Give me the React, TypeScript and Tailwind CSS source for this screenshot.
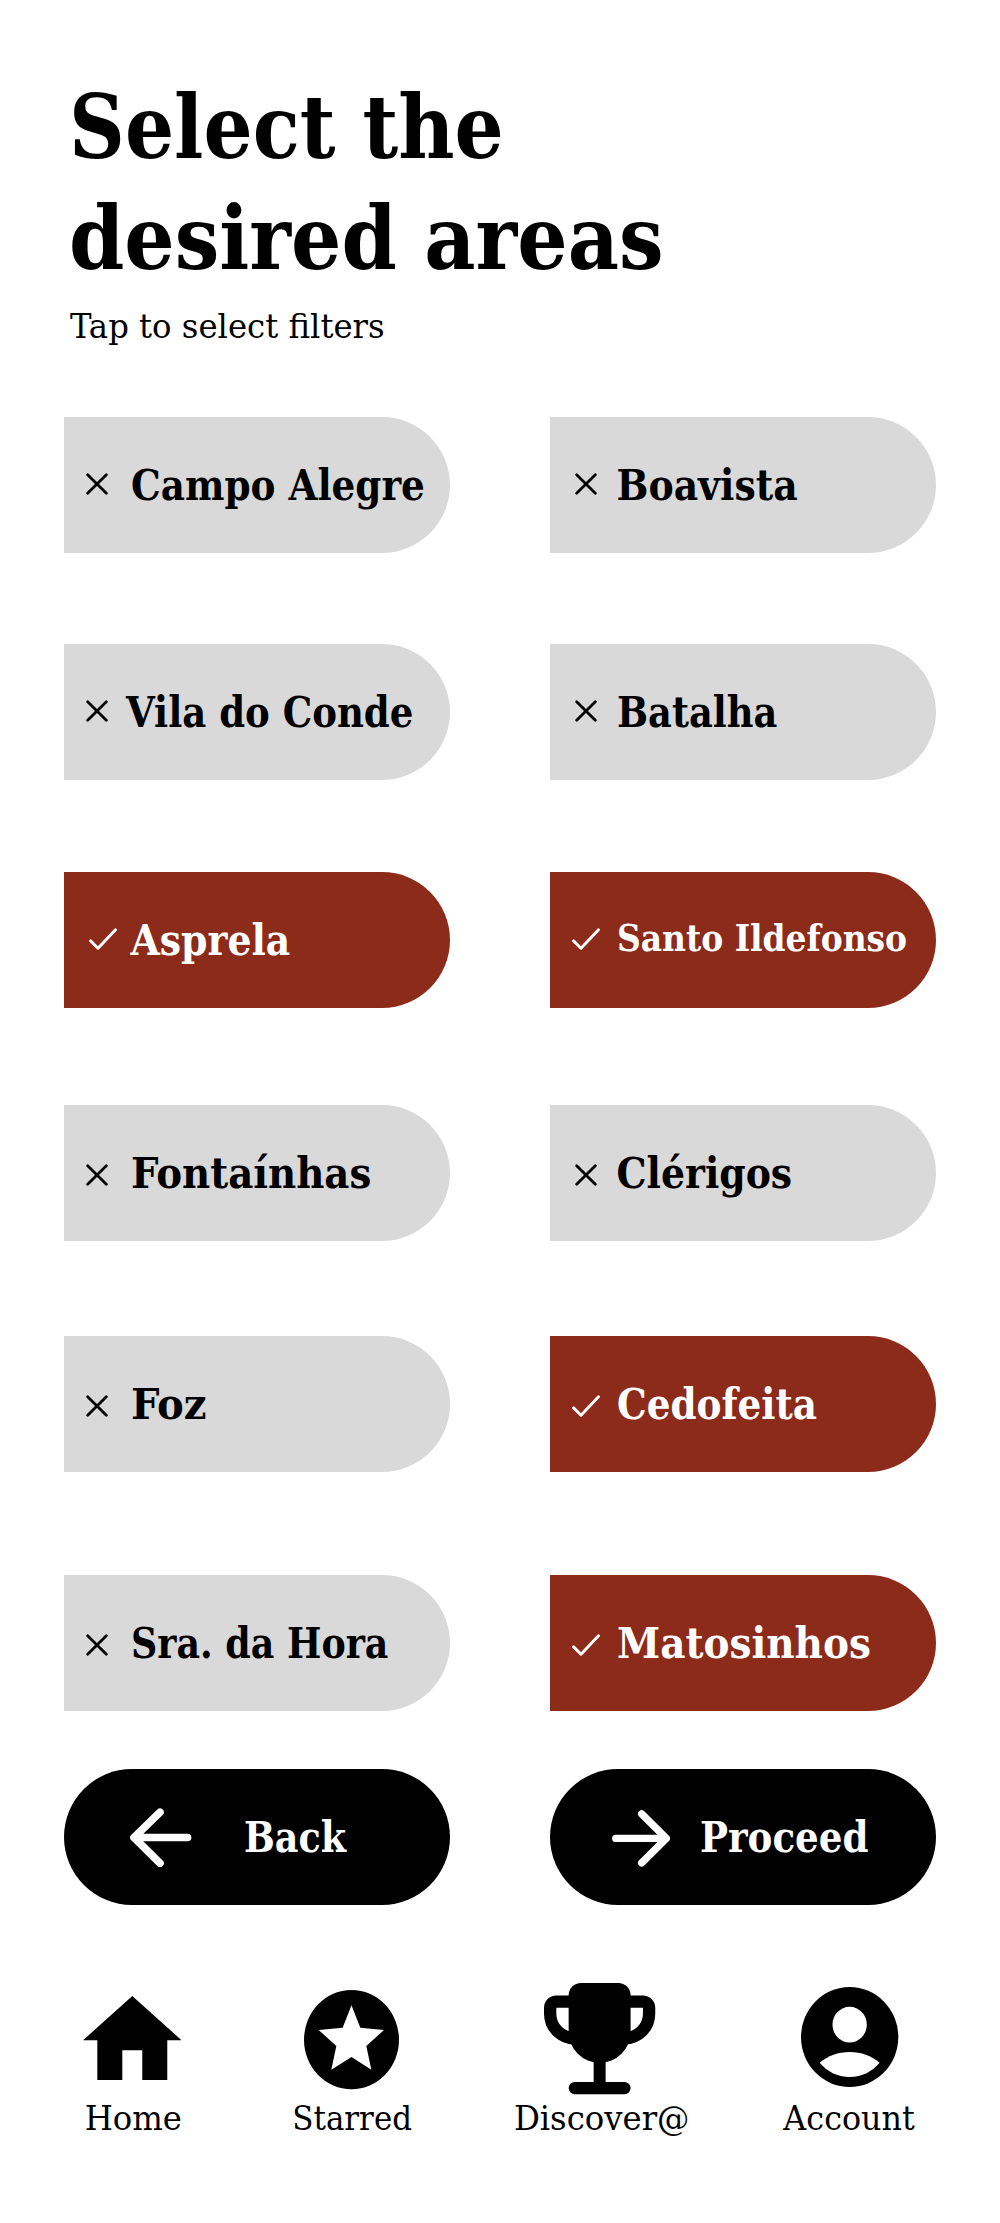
import type { ReactNode } from "react";

type Area = { name: string; selected?: boolean; icon: string; label: string };

// Two areas per row; `gap` is the space above the row.
const rows: { gap: string; areas: [Area, Area] }[] = [
  {
    gap: "mt-[70px]",
    areas: [
      { name: "Campo Alegre", icon: "pl-[22px] pb-[3px]", label: "text-[42px] scale-x-[0.988]" },
      { name: "Boavista", icon: "pl-[25px] pb-[3px]", label: "text-[42px]" },
    ],
  },
  {
    gap: "mt-[91px]",
    areas: [
      { name: "Vila do Conde", icon: "pl-[22px] pb-[2px]", label: "text-[42px] -ml-[5px] scale-x-[0.981]" },
      { name: "Batalha", icon: "pl-[25px] pb-[2px]", label: "text-[42px] scale-x-[0.974]" },
    ],
  },
  {
    gap: "mt-[92px]",
    areas: [
      { name: "Asprela", selected: true, icon: "pl-[24.7px] pb-[2px]", label: "text-[42px]" },
      { name: "Santo Ildefonso", selected: true, icon: "pl-[22px] pb-[2px]", label: "text-[37px] pb-[6px] scale-x-[0.989]" },
    ],
  },
  {
    gap: "mt-[97px]",
    areas: [
      { name: "Fontaínhas", icon: "pl-[22px] pt-[3px]", label: "text-[42px] scale-x-[1.026]" },
      { name: "Clérigos", icon: "pl-[25px] pt-[3px]", label: "text-[42px]" },
    ],
  },
  {
    gap: "mt-[95px]",
    areas: [
      { name: "Foz", icon: "pl-[22px] pt-[3px]", label: "text-[42px] scale-x-[1.061]" },
      { name: "Cedofeita", selected: true, icon: "pl-[22px] pt-[3px]", label: "text-[42px] scale-x-[0.988]" },
    ],
  },
  {
    gap: "mt-[103px]",
    areas: [
      { name: "Sra. da Hora", icon: "pl-[22px] pt-[3px]", label: "text-[42px] scale-x-[0.963]" },
      { name: "Matosinhos", selected: true, icon: "pl-[22px] pt-[3px]", label: "text-[42px] scale-x-[1.032]" },
    ],
  },
];

function CrossIcon() {
  return (
    <svg className="h-[22px] w-[22px]" viewBox="0 0 22 22" fill="none" stroke="currentColor" strokeWidth="2.8" strokeLinecap="round">
      <path d="M1.7 1.7 20.3 20.3M20.3 1.7 1.7 20.3" />
    </svg>
  );
}

function CheckIcon() {
  return (
    <svg className="h-[22px] w-[28px]" viewBox="0 0 28 22" fill="none" stroke="currentColor" strokeWidth="2.9" strokeLinecap="round" strokeLinejoin="round">
      <path d="M1.6 12.9 9 20.2 26.5 1.7" />
    </svg>
  );
}

function AreaChip({ area }: { area: Area }) {
  return (
    <button
      className={`flex h-[136px] w-[386px] items-center rounded-r-[68px] ${
        area.selected ? "bg-[#8c2b1a] text-white" : "bg-[#d9d9d9] text-black"
      }`}
    >
      <span className={`flex w-[66.5px] shrink-0 ${area.icon}`}>{area.selected ? <CheckIcon /> : <CrossIcon />}</span>
      <span className={`origin-left pt-px leading-[50px] font-bold whitespace-nowrap ${area.label}`}>{area.name}</span>
    </button>
  );
}

function NavItem({ icon, iconClass, label, labelClass }: { icon: ReactNode; iconClass: string; label: string; labelClass: string }) {
  return (
    <a className="flex flex-col items-center">
      <span className={`flex h-[112px] items-start ${iconClass}`}>{icon}</span>
      <span className={`mt-1 text-[33.4px] leading-10 whitespace-nowrap ${labelClass}`}>{label}</span>
    </a>
  );
}

export default function App() {
  return (
    <div className="min-h-[2223px] w-[1000px] bg-white pt-[72px] font-['DejaVu_Serif_Condensed','DejaVu_Serif',serif] text-black">
      <header className="pl-[69px]">
        <h1 className="text-[88px] leading-[111px] font-bold whitespace-nowrap">
          <span className="block w-fit origin-left scale-x-[0.977]">Select the</span>
          <span className="block w-fit">desired areas</span>
        </h1>
        <p className="mt-[13px] w-fit origin-left scale-x-[1.077] pl-px text-[33.4px] leading-10 whitespace-nowrap">Tap to select filters</p>
      </header>

      <main className="pl-16">
        {rows.map((row) => (
          <div key={row.areas[0].name} className={`flex gap-[100px] ${row.gap}`}>
            <AreaChip area={row.areas[0]} />
            <AreaChip area={row.areas[1]} />
          </div>
        ))}

        <div className="mt-[58px] flex gap-[100px] text-[42px] leading-[50px] font-bold text-white">
          <button className="flex h-[136px] w-[386px] items-center rounded-full bg-black pl-[66.3px]">
            <svg className="h-[59px] w-[62px]" viewBox="0 0 62 59" fill="none" stroke="currentColor" strokeWidth="7.6" strokeLinecap="round" strokeLinejoin="round">
              <path d="M30 4.2 4 29.5 30 55.2M5 29.5H57.6" />
            </svg>
            <span className="ml-[52px] origin-left scale-x-[0.965] pt-px">Back</span>
          </button>
          <button className="flex h-[136px] w-[386px] items-center rounded-full bg-black pl-[62px]">
            <svg className="mt-[3px] h-[57px] w-[58px]" viewBox="0 0 58 57" fill="none" stroke="currentColor" strokeWidth="7.4" strokeLinecap="round" strokeLinejoin="round">
              <path d="M29.7 3.9 54.3 28.4 29.7 52.9M3.8 28.4H53" />
            </svg>
            <span className="ml-[30px] origin-left scale-x-[0.985] pt-px">Proceed</span>
          </button>
        </div>
      </main>

      <nav className="mt-[78px] grid grid-cols-[146px_292px_206px_292px] pl-[60px]">
        <NavItem
          label="Home"
          iconClass="pt-[13px] pr-[2px]"
          labelClass="pl-px scale-x-[1.075]"
          icon={
            <svg className="h-[84.3px] w-[98.6px]" viewBox="68 107 296 253" fill="currentColor">
              <path d="M216 107 364 240H321V360H246V270H186V360H111V240H68Z" />
            </svg>
          }
        />
        <NavItem
          label="Starred"
          iconClass="pt-[7.3px] pr-px"
          labelClass="pl-px scale-x-[1.029]"
          icon={
            <svg className="h-[99.3px] w-[95px]" viewBox="732 91 285 298" fill="currentColor">
              <ellipse cx="874.5" cy="240" rx="142.5" ry="149" />
              <path fill="#fff" d="M874.5 137 901 204 972 211 919 259 934 330 874.5 292 814 330 829 259 776 211 848 204Z" />
            </svg>
          }
        />
        <NavItem
          label="Discover@"
          iconClass="pr-[2px]"
          labelClass="pl-[2px] scale-x-[1.076]"
          icon={
            <svg className="h-[111.6px] w-[111.6px]" viewBox="133 69 335 335" fill="currentColor">
              <path d="M207 106A37 37 0 0 1 244 69H356A37 37 0 0 1 393 106V216A93 93 0 0 1 207 216Z" />
              <path d="M282 300H318V366H374.5A18.5 18.5 0 0 1 374.5 403H225.5A18.5 18.5 0 0 1 225.5 366H282Z" />
              <path
                fill="none"
                stroke="currentColor"
                strokeWidth="37"
                d="M215 125H170A18.5 18.5 0 0 0 151.5 143.5V161A74 74 0 0 0 225.5 235M385 125H430A18.5 18.5 0 0 1 448.5 143.5V161A74 74 0 0 1 374.5 235"
              />
            </svg>
          }
        />
        <NavItem
          label="Account"
          iconClass="pt-[4.3px]"
          labelClass="pr-px scale-x-[1.058]"
          icon={
            <svg className="h-[100px] w-[97.3px]" viewBox="904 82 292 300" fill="currentColor">
              <ellipse cx="1050" cy="232" rx="146" ry="150" />
              <ellipse cx="1050" cy="195" rx="51.5" ry="53.5" fill="#fff" />
              <path fill="#fff" d="M960 309C985 289 1015 277 1050 277S1115 289 1140 309C1118 335 1087 352 1050 352S982 335 960 309Z" />
            </svg>
          }
        />
      </nav>
    </div>
  );
}
